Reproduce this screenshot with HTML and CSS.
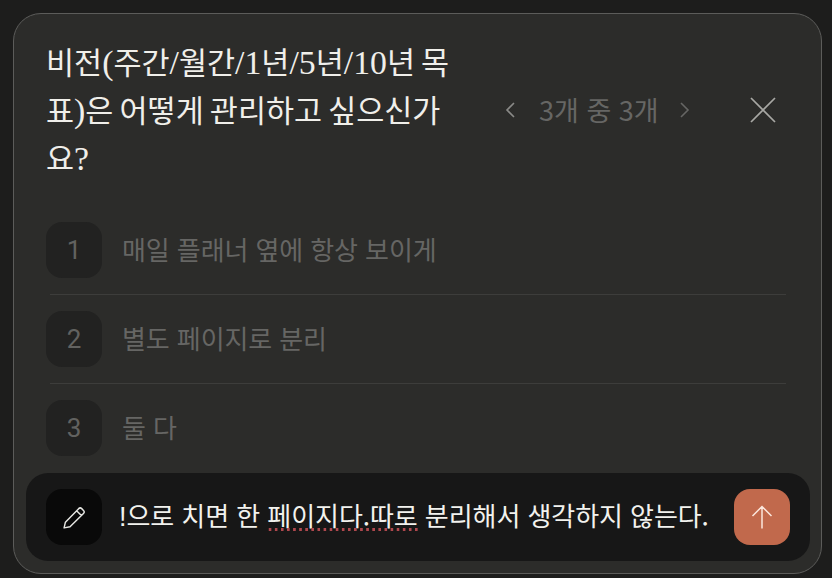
FILE: index.html
```html
<!DOCTYPE html>
<html lang="ko">
<head>
<meta charset="utf-8">
<title>비전 관리</title>
<link rel="stylesheet" href="styles.css">
</head>
<body>
<main class="card">
  <header class="head">
    <h1 class="title">비전<span class="latin">(</span>주간<span class="latin">/</span>월간<span class="latin">/1</span>년<span class="latin">/5</span>년<span class="latin">/10</span>년 목표<span class="latin">)</span>은 어떻게 관리하고 싶으신가요<span class="latin">?</span></h1>
    <nav class="pager">
      <svg class="chev" viewBox="0 0 12 20"><path d="M10 3 3 10l7 7"/></svg>
      <span class="count">3개 중 3개</span>
      <svg class="chev dim" viewBox="0 0 12 20"><path d="M2 3l7 7-7 7"/></svg>
    </nav>
    <svg class="close" viewBox="0 0 26 26"><path d="M1 1l24 24M25 1 1 25"/></svg>
  </header>
  <ul class="options">
    <li class="option"><span class="num">1</span><span class="label">매일 플래너 옆에 항상 보이게</span></li>
    <li class="rule"></li>
    <li class="option"><span class="num">2</span><span class="label">별도 페이지로 분리</span></li>
    <li class="rule"></li>
    <li class="option"><span class="num">3</span><span class="label">둘 다</span></li>
  </ul>
  <div class="composer">
    <span class="pen">
      <svg viewBox="2 2 21 21"><path d="M3 22l1.2-5.2L16.3 4.400a2 2 0 0 1 2.800 0l1.600 1.600a2 2 0 0 1 0 2.800L8.400 21zM14.400 6.300l4.400 4.400"/></svg>
    </span>
    <div class="text"><span class="clip">!</span>으로 치면 한 <span class="typo">페이지다.따로</span> 분리해서 생각하지 않는다.</div>
    <button class="send" type="button" aria-label="보내기">
      <svg viewBox="0 0 24 24"><path d="M12 23.500V1.500M2.500 11 12 1.500l9.500 9.500"/></svg>
    </button>
  </div>
</main>
</body>
</html>
```
FILE: styles.css
```css
* { box-sizing: border-box; }
html, body { margin: 0; height: 100%; }
body {
  background: #1d1d1c;
  padding: 13px 10px 4px 13px;
  font-family: "Noto Sans CJK KR", "Liberation Sans", sans-serif;
  overflow: hidden;
}
.card {
  height: 561px;
  background: #2c2c2a;
  border: 1px solid #5c5c5a;
  border-radius: 28px;
  display: flex;
  flex-direction: column;
  padding: 24px 11px 12px 12px;
}
.head {
  display: flex;
  align-items: center;
  padding-left: 20px;
}
.title {
  margin: 0;
  padding-top: 2px;
  height: 144px;
  width: 408px;
  flex: none;
  font-family: "Liberation Serif", "Noto Sans CJK KR", serif;
  font-size: 30.5px;
  font-weight: 400;
  line-height: 48px;
  word-spacing: -1.5px;
  color: #f0efea;
  word-break: break-all;
}
.latin { font-size: 33.8px; line-height: 40px; }
.pager {
  margin-left: 50px;
  margin-top: -1px;
  display: flex;
  align-items: center;
}
.chev {
  width: 12px;
  height: 20px;
  fill: none;
  stroke: #8a8a87;
  stroke-width: 1.6;
}
.chev.dim { stroke: #666664; }
.count {
  margin: 0 20px 0 23px;
  font-size: 27px;
  line-height: 32px;
  color: #666664;
}
.close {
  margin-left: 59px;
  width: 26px;
  height: 26px;
  fill: none;
  stroke: #a8a8a4;
  stroke-width: 1.7;
}
.options {
  list-style: none;
  margin: 40px 0 0;
  padding: 0 0 0 20px;
  flex: 1;
}
.option {
  display: flex;
  align-items: center;
  height: 56px;
}
.rule {
  height: 1px;
  margin: 16px 24px 16px 4px;
  background: #3d3d3b;
}
.num {
  width: 56px;
  height: 56px;
  flex: none;
  border-radius: 16px;
  background: #222221;
  color: #626260;
  font-family: "Roboto", sans-serif;
  font-size: 26px;
  display: flex;
  align-items: center;
  justify-content: center;
}
.label {
  margin-left: 20px;
  padding-bottom: 4px;
  font-size: 26px;
  letter-spacing: -0.1px;
  color: #666664;
}
.composer {
  height: 88px;
  flex: none;
  background: #171717;
  border-radius: 22px;
  display: flex;
  align-items: center;
  padding: 0 20px;
}
.pen {
  width: 56px;
  height: 56px;
  flex: none;
  border-radius: 16px;
  background: #090909;
  display: flex;
  align-items: center;
  justify-content: center;
}
.pen svg {
  width: 23px;
  height: 23px;
  fill: none;
  stroke: #e8e8e4;
  stroke-width: 1.3;
  stroke-linejoin: round;
}
.text {
  flex: 1;
  min-width: 0;
  margin-left: 17px;
  padding-bottom: 5px;
  font-size: 26px;
  letter-spacing: -0.07px;
  color: #f2f2ee;
  white-space: nowrap;
  overflow: hidden;
}
.clip { font-family: "Liberation Sans", sans-serif; font-size: 27px; }
.typo {
  position: relative;
}
.typo::after {
  content: "";
  position: absolute;
  left: 0;
  right: 0;
  bottom: 2px;
  height: 3px;
  background: radial-gradient(circle, #b0484e 1.4px, transparent 1.6px) 0 0 / 6.1px 3px repeat-x;
}
.send {
  width: 56px;
  height: 56px;
  flex: none;
  padding: 0;
  border: 0;
  border-radius: 16px;
  background: #c1694c;
  display: flex;
  align-items: center;
  justify-content: center;
}
.send svg {
  width: 24px;
  height: 24px;
  fill: none;
  stroke: #fbe6dc;
  stroke-width: 1.5;
}
```
